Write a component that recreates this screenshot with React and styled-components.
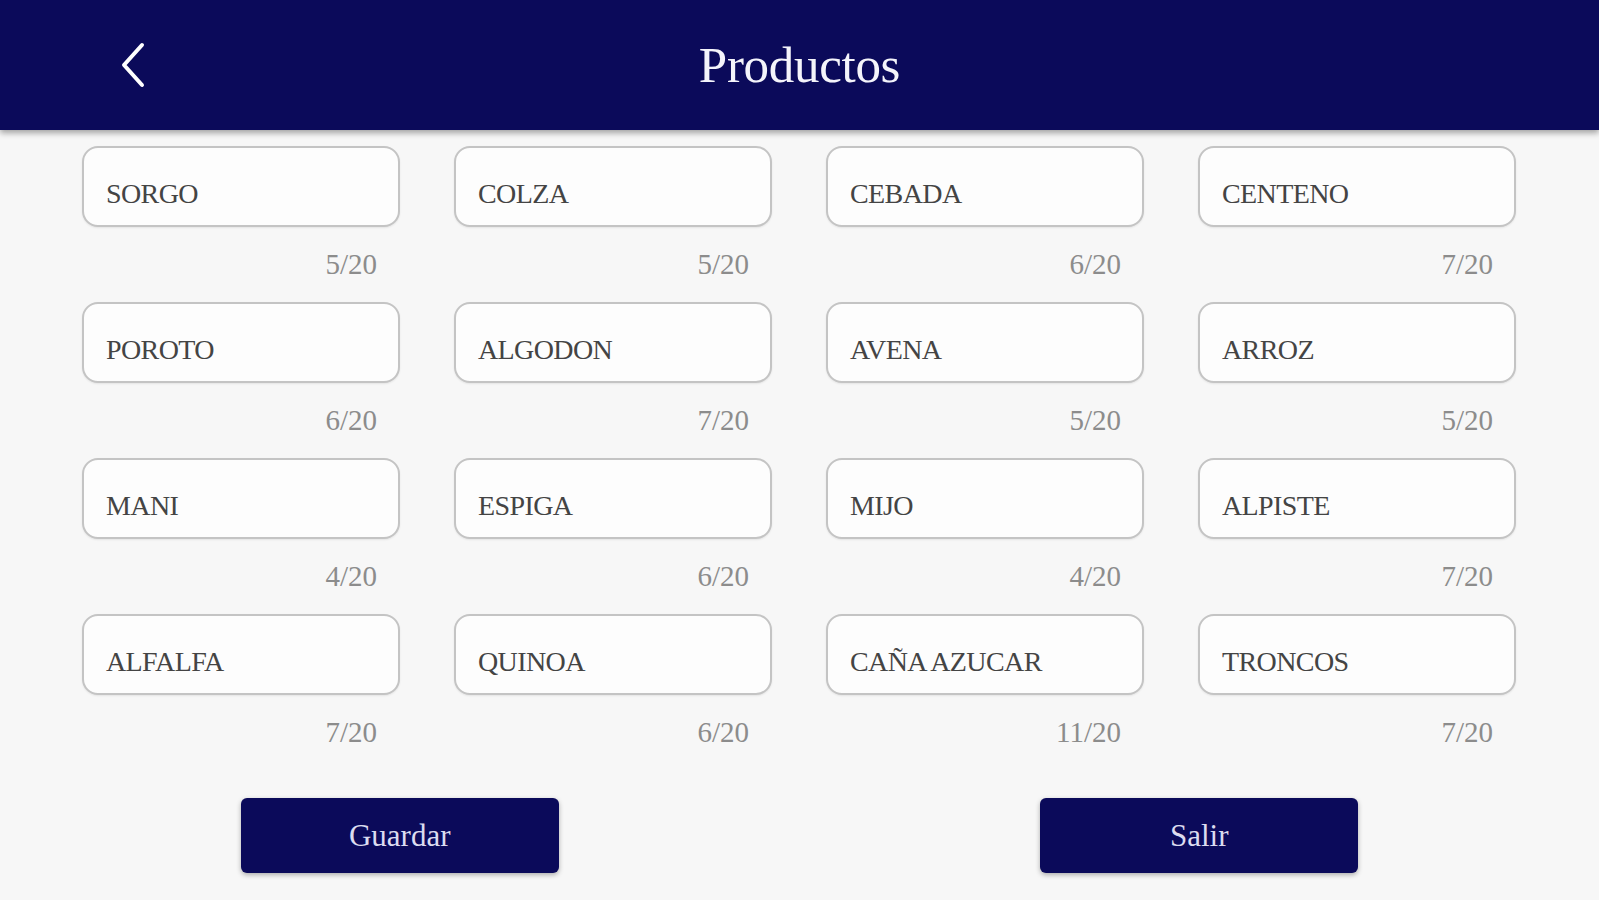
import React from "react";
import styled, { createGlobalStyle } from "styled-components";

const GlobalStyle = createGlobalStyle`
    html,
    body {
        margin: 0;
        padding: 0;
        background: #f7f7f7;
        font-family: "Liberation Serif", "DejaVu Serif", serif;
    }
`;

const Page = styled.div`
    width: 1599px;
    height: 900px;
    display: flex;
    flex-direction: column;
    background: #f7f7f7;
    overflow: hidden;
`;

const Header = styled.header`
    height: 130px;
    flex-shrink: 0;
    display: grid;
    grid-template-columns: 1fr auto 1fr;
    align-items: center;
    padding: 0 120px;
    background: #0b0a5a;
    box-shadow: 0 3px 6px rgba(0, 0, 0, 0.35);
    position: relative;
    z-index: 1;
`;

const BackButton = styled.button`
    justify-self: start;
    display: flex;
    align-items: center;
    padding: 0;
    border: none;
    background: none;
    cursor: pointer;

    svg {
        width: 26px;
        height: 46px;
    }
`;

const Title = styled.h1`
    margin: 0;
    font-size: 51px;
    font-weight: 400;
    color: #f4f4fb;
    letter-spacing: -0.3px;
`;

const Grid = styled.div`
    display: grid;
    grid-template-columns: repeat(4, 318px);
    column-gap: 54px;
    row-gap: 23px;
    padding: 16px 82px 0;
`;

const Cell = styled.div`
    display: flex;
    flex-direction: column;
`;

const Field = styled.div`
    height: 81px;
    box-sizing: border-box;
    display: flex;
    align-items: center;
    padding: 15px 20px 0 22px;
    border: 2px solid #c4c4c4;
    border-radius: 16px;
    background: #fdfdfd;
    box-shadow: 0 1px 2px rgba(0, 0, 0, 0.08);
    font-size: 28px;
    color: #444444;
    letter-spacing: -0.6px;
`;

const Counter = styled.div`
    height: 30px;
    margin-top: 22px;
    padding-right: 23px;
    text-align: right;
    font-size: 29px;
    line-height: 30px;
    color: #8c8c8c;
`;

const Actions = styled.div`
    display: flex;
    margin-top: 51px;
`;

const Half = styled.div`
    flex: 1;
    display: flex;
    justify-content: center;
`;

const ActionButton = styled.button`
    width: 318px;
    height: 75px;
    border: none;
    border-radius: 6px;
    background: #0b0a5a;
    color: #dcdcf0;
    font-family: "Liberation Serif", "DejaVu Serif", serif;
    font-size: 31px;
    box-shadow: 0 2px 5px rgba(0, 0, 0, 0.3);
    cursor: pointer;
`;

const products = [
    "SORGO", "COLZA", "CEBADA", "CENTENO",
    "POROTO", "ALGODON", "AVENA", "ARROZ",
    "MANI", "ESPIGA", "MIJO", "ALPISTE",
    "ALFALFA", "QUINOA", "CAÑA AZUCAR", "TRONCOS",
];

function App() {
    return (
        <Page>
            <GlobalStyle />
            <Header>
                <BackButton aria-label="Volver">
                    <svg viewBox="0 0 26 46" fill="none">
                        <polyline
                            points="22,3 4,23 22,43"
                            stroke="#ffffff"
                            strokeWidth="4"
                            strokeLinecap="round"
                            strokeLinejoin="round"
                        />
                    </svg>
                </BackButton>
                <Title>Productos</Title>
                <div />
            </Header>

            <Grid>
                {products.map((name) => (
                    <Cell key={name}>
                        <Field>{name}</Field>
                        <Counter>{name.length}/20</Counter>
                    </Cell>
                ))}
            </Grid>

            <Actions>
                <Half>
                    <ActionButton>Guardar</ActionButton>
                </Half>
                <Half>
                    <ActionButton>Salir</ActionButton>
                </Half>
            </Actions>
        </Page>
    );
}

export default App;
